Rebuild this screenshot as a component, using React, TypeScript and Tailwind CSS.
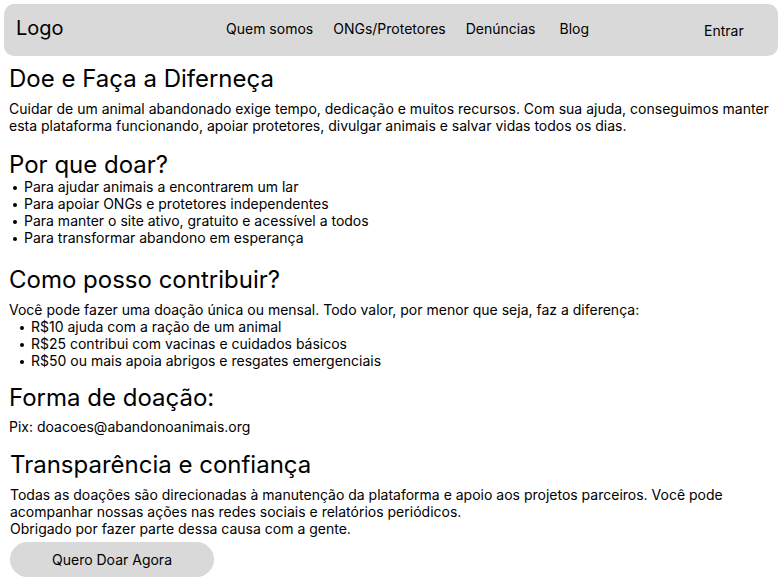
import React from "react";

const Dot = ({ ml }: { ml: string }) => (
  <span className={`${ml} mt-[8px] h-[4px] w-[4px] shrink-0 rounded-full bg-black`} />
);

export default function App() {
  const font = { fontFamily: "Inter, 'Noto Sans', sans-serif" };
  const list1 = [
    "Para ajudar animais a encontrarem um lar",
    "Para apoiar ONGs e protetores independentes",
    "Para manter o site ativo, gratuito e acessível a todos",
    "Para transformar abandono em esperança",
  ];
  const list2 = [
    "R$10 ajuda com a ração de um animal",
    "R$25 contribui com vacinas e cuidados básicos",
    "R$50 ou mais apoia abrigos e resgates emergenciais",
  ];
  return (
    <div className="min-h-[582px] w-[783px] bg-white text-black" style={font}>
      <header className="ml-[4px] mt-[4px] flex h-[52px] w-[774px] items-start rounded-[10px] bg-[#d9d9d9] pl-[12px]">
        <div className="mt-[12px] w-[210px] text-[20px] leading-[24px]">Logo</div>
        <nav className="mt-[16px] flex w-[478px] gap-[20px] text-[14px] leading-[17px]">
          <span>Quem somos</span>
          <span>ONGs/Protetores</span>
          <span>Denúncias</span>
          <span className="ml-[4px]">Blog</span>
        </nav>
        <div className="mt-[18px] text-[14px] leading-[17px]">Entrar</div>
      </header>

      <main className="pl-[9px]">
        <h1 className="mt-[11px] text-[24px] leading-[24px] font-normal">Doe e Faça a Diferneça</h1>
        <p className="mt-[9px] text-[14px] leading-[17px]">
          Cuidar de um animal abandonado exige tempo, dedicação e muitos recursos. Com sua ajuda, conseguimos manter
          <br />
          esta plataforma funcionando, apoiar protetores, divulgar animais e salvar vidas todos os dias.
        </p>

        <h2 className="mt-[19px] text-[24px] leading-[24px] font-normal">Por que doar?</h2>
        <ul className="mt-[1px] text-[14px] leading-[17px]">
          {list1.map((t) => (
            <li key={t} className="flex">
              <Dot ml="ml-[4px]" />
              <span className="ml-[7px]">{t}</span>
            </li>
          ))}
        </ul>

        <h2 className="mt-[22px] text-[24px] leading-[24px] font-normal">Como posso contribuir?</h2>
        <p className="mt-[9px] text-[14px] leading-[17px]">
          Você pode fazer uma doação única ou mensal. Todo valor, por menor que seja, faz a diferença:
        </p>
        <ul className="text-[14px] leading-[17px]">
          {list2.map((t) => (
            <li key={t} className="flex">
              <Dot ml="ml-[11px]" />
              <span className="ml-[7px]">{t}</span>
            </li>
          ))}
        </ul>

        <h2 className="mt-[17px] text-[24px] leading-[24px] font-normal">Forma de doação:</h2>
        <p className="mt-[8px] text-[14px] leading-[17px]">Pix: doacoes@abandonoanimais.org</p>

        <h2 className="mt-[18px] pl-[1px] text-[24px] leading-[24px] font-normal">Transparência e confiança</h2>
        <p className="mt-[9px] pl-[1px] text-[14px] leading-[17px]">
          Todas as doações são direcionadas à manutenção da plataforma e apoio aos projetos parceiros. Você pode
          <br />
          acompanhar nossas ações nas redes sociais e relatórios periódicos.
          <br />
          Obrigado por fazer parte dessa causa com a gente.
        </p>
        <button className="ml-[1px] mt-[5px] flex h-[35px] w-[204px] items-center justify-center rounded-full bg-[#d9d9d9] text-[14px] leading-[17px]">
          Quero Doar Agora
        </button>
      </main>
    </div>
  );
}
